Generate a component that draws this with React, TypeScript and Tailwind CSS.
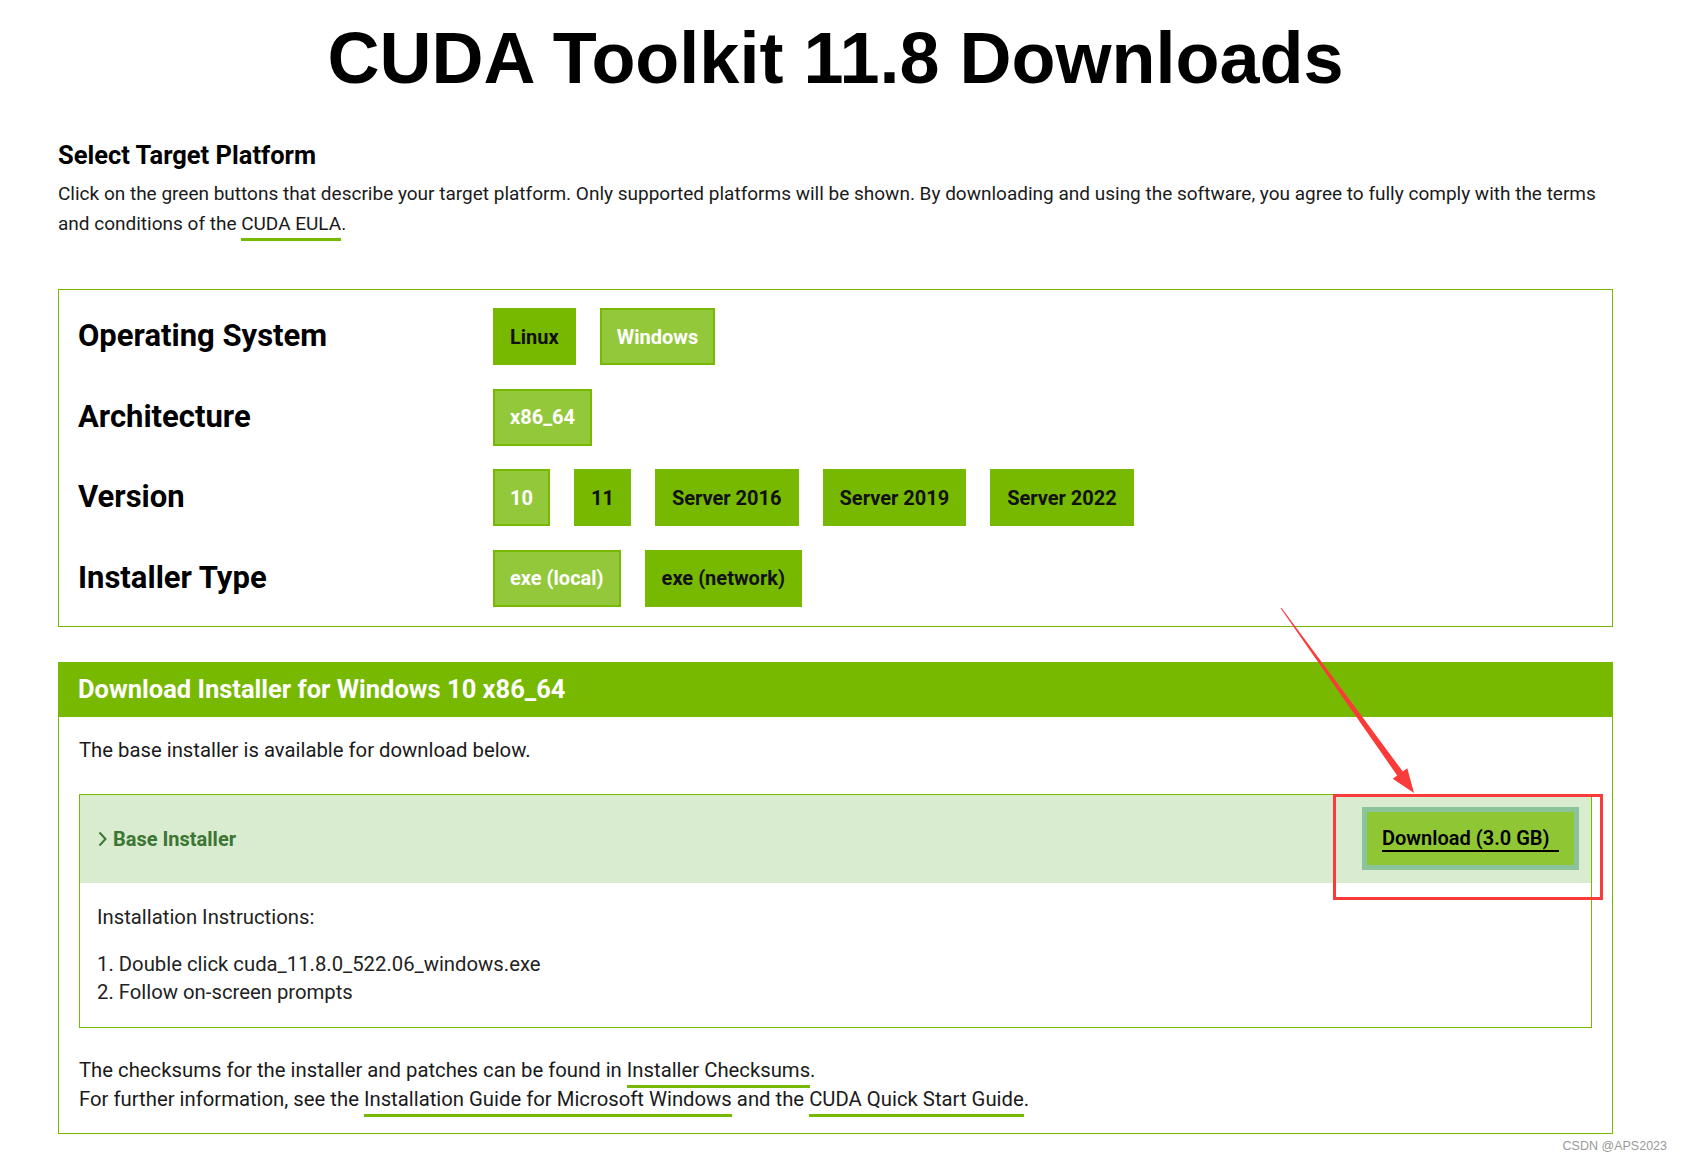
import type { ReactNode } from "react";

type Choice = {
  label: string;
  selected?: boolean;
};

const rows: { title: string; choices: Choice[] }[] = [
  {
    title: "Operating System",
    choices: [{ label: "Linux" }, { label: "Windows", selected: true }],
  },
  { title: "Architecture", choices: [{ label: "x86_64", selected: true }] },
  {
    title: "Version",
    choices: [
      { label: "10", selected: true },
      { label: "11" },
      { label: "Server 2016" },
      { label: "Server 2019" },
      { label: "Server 2022" },
    ],
  },
  {
    title: "Installer Type",
    choices: [{ label: "exe (local)", selected: true }, { label: "exe (network)" }],
  },
];

function GreenLink({ children }: { children: ReactNode }) {
  return (
    <a href="#" className="border-b-[3px] border-[#76b900] pb-[3px]">
      {children}
    </a>
  );
}

function PlatformButton({ choice }: { choice: Choice }) {
  return (
    <button
      className={
        choice.selected
          ? "h-[57px] border-2 border-[#76b900] bg-[#93c83a] px-[15px] text-[20px] font-bold text-white"
          : "h-[57px] border-2 border-[#76b900] bg-[#76b900] px-[15px] text-[20px] font-bold text-[#111]"
      }
    >
      {choice.label}
    </button>
  );
}

function App() {
  return (
    <div className="relative min-h-[1162px] w-[1683px] bg-white pl-[58px] pr-[70px] font-['Roboto',sans-serif] text-[#1a1a1a]">
      <h1 className="pt-[22px] text-center font-['Liberation_Sans',Arial,sans-serif] text-[72px] font-bold leading-[72px] text-black">
        CUDA Toolkit 11.8 Downloads
      </h1>

      <h2 className="mt-[46px] text-[25.5px] font-bold leading-[30px] text-black">
        Select Target Platform
      </h2>
      <p className="mt-[9px] text-[19px] leading-[30px]">
        <span className="block whitespace-nowrap">
          Click on the green buttons that describe your target platform. Only supported platforms will be shown. By
          downloading and using the software, you agree to fully comply with the terms
        </span>
        <span className="block whitespace-nowrap">
          and conditions of the <GreenLink>CUDA EULA</GreenLink>.
        </span>
      </p>

      <section className="mt-[50px] flex flex-col gap-[23.5px] border border-[#76b900] pb-[19px] pl-[19px] pt-[18px]">
        {rows.map((row) => (
          <div key={row.title} className="flex items-center">
            <div className="w-[415px] text-[31px] font-bold text-black">{row.title}</div>
            <div className="flex gap-[24px]">
              {row.choices.map((choice) => (
                <PlatformButton key={choice.label} choice={choice} />
              ))}
            </div>
          </div>
        ))}
      </section>

      <section className="mt-[35px] border border-[#76b900]">
        <div className="flex h-[54px] items-center bg-[#76b900] px-[19px] text-[25.5px] font-bold text-white">
          Download Installer for Windows 10 x86_64
        </div>
        <div className="px-[20px] pb-[19px] pt-[19px] text-[20.3px]">
          <p className="leading-[28px]">The base installer is available for download below.</p>

          <div className="mt-[30px] border border-[#76b900]">
            <div className="flex h-[88px] items-center justify-between bg-[#d9ecd0] pl-[18px] pr-[12px]">
              <div className="flex items-center gap-[6px] text-[20px] font-bold text-[#3b7634]">
                <svg width="9" height="16" viewBox="0 0 9 16" fill="none">
                  <path d="M1.5 1.5 L7.5 8 L1.5 14.5" stroke="#3b7634" strokeWidth="2" />
                </svg>
                Base Installer
              </div>
              <button className="flex h-[63px] w-[217px] items-center border-[5px] border-[#8bc49b] bg-[#8fc634] px-[15px] text-[20px] font-semibold text-black">
                <span className="border-b-2 border-black pr-[9px] leading-[24px]">Download (3.0 GB)</span>
              </button>
            </div>
            <div className="px-[17px] pb-[21px] pt-[20px] leading-[28px] text-[#222]">
              <p>Installation Instructions:</p>
              <ol className="mt-[19px] list-inside list-decimal">
                <li>Double click cuda_11.8.0_522.06_windows.exe</li>
                <li>Follow on-screen prompts</li>
              </ol>
            </div>
          </div>

          <div className="mt-[28px] leading-[29px]">
            <p>
              The checksums for the installer and patches can be found in <GreenLink>Installer Checksums</GreenLink>.
            </p>
            <p>
              For further information, see the <GreenLink>Installation Guide for Microsoft Windows</GreenLink> and the{" "}
              <GreenLink>CUDA Quick Start Guide</GreenLink>.
            </p>
          </div>
        </div>
      </section>

      <div className="-mr-[54px] mt-[4px] text-right font-['Liberation_Sans',Arial,sans-serif] text-[12.5px] leading-[16px] text-[#9a9a9a]">
        CSDN @APS2023
      </div>

      {/* annotation drawn over the screenshot */}
      <svg
        className="pointer-events-none absolute left-0 top-0"
        width="1683"
        height="1162"
        viewBox="0 0 1683 1162"
      >
        <polygon
          points="1281.4,607.7 1402.8,771.5 1407.3,768.2 1414,793 1392.7,778.8 1397.2,775.5 1280.6,608.3"
          fill="#fb3a3a"
        />
        <rect x="1334.5" y="795.5" width="267" height="103" fill="none" stroke="#fb3a3a" strokeWidth="3" />
      </svg>
    </div>
  );
}

export default App;
